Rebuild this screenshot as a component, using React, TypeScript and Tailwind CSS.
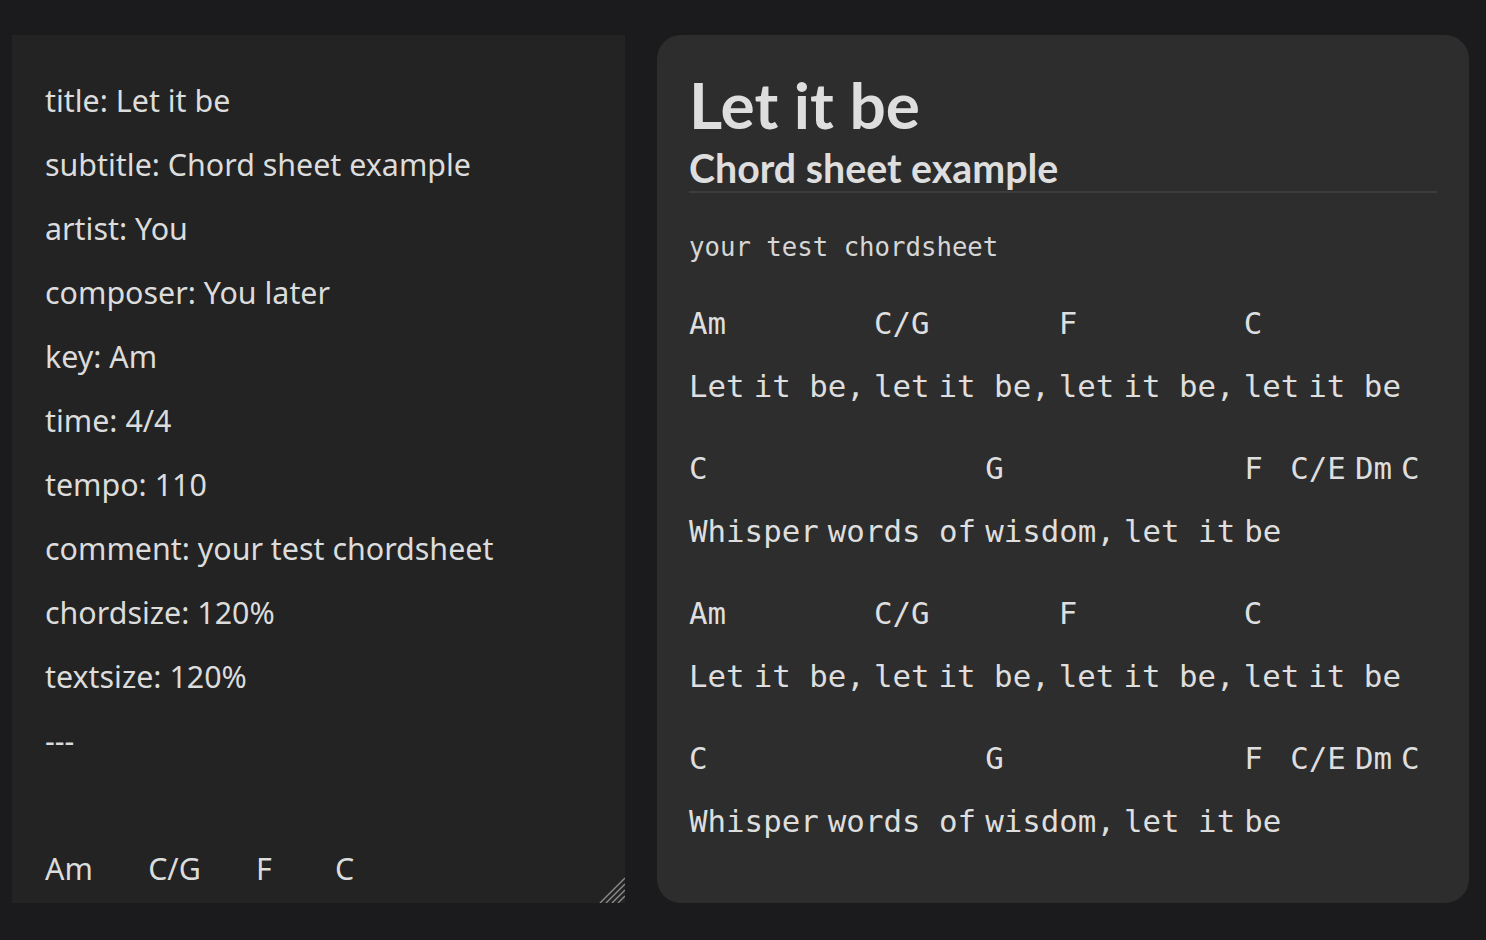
import React from "react";

type Col = { chord: string; lyric: string[] };

const lineA: Col[] = [
  { chord: "Am", lyric: ["Let", "it be,"] },
  { chord: "C/G", lyric: ["let", "it be,"] },
  { chord: "F", lyric: ["let", "it be,"] },
  { chord: "C", lyric: ["let", "it be"] },
];

const lineB: Col[] = [
  { chord: "C", lyric: ["Whisper", "words of"] },
  { chord: "G", lyric: ["wisdom,", "let it"] },
  { chord: "F", lyric: ["be"] },
  { chord: "C/E", lyric: [] },
  { chord: "Dm", lyric: [] },
  { chord: "C", lyric: [] },
];

const source = `title: Let it be
subtitle: Chord sheet example
artist: You
composer: You later
key: Am
time: 4/4
tempo: 110
comment: your test chordsheet
chordsize: 120%
textsize: 120%
---

Am       C/G       F        C
Let it be, let it be, let it be, let it be`;

function ChordLine({ cols }: { cols: Col[] }) {
  return (
    <div className="flex gap-[9px] mb-[19px]">
      {cols.map((c, i) => (
        <div key={i} className="flex flex-col">
          <div className="h-[63px] leading-[63px] whitespace-pre">{c.chord}</div>
          <div className="h-[63px] leading-[63px] flex gap-[9px] whitespace-pre">
            {c.lyric.map((w, j) => (
              <span key={j}>{w}</span>
            ))}
          </div>
        </div>
      ))}
    </div>
  );
}

export default function App() {
  return (
    <div className="w-[1486px] h-[940px] bg-[#1b1b1d] flex gap-8 pl-[12px] pr-[17px] pt-[35px] pb-[37px] overflow-hidden">
      <div className="relative w-[613px] h-[868px] shrink-0">
        <textarea
          readOnly
          value={source}
          spellCheck={false}
          className="block w-full h-full bg-[#232323] text-[#dcdcdc] text-[30.4px] leading-[64px] pl-[33px] pt-[34px] pr-4 overflow-hidden outline-none border-0 resize-none"
          style={{ fontFamily: '"Noto Sans", sans-serif' }}
        />
        <svg
          className="absolute right-0 bottom-0 pointer-events-none"
          width="26"
          height="26"
          viewBox="0 0 26 26"
        >
          <g stroke="#8a8a8a" strokeWidth="1.4">
            <line x1="1" y1="26" x2="26" y2="1" />
            <line x1="7" y1="26" x2="26" y2="7" />
            <line x1="13" y1="26" x2="26" y2="13" />
            <line x1="19" y1="26" x2="26" y2="19" />
          </g>
        </svg>
      </div>
      <div className="flex-1 h-[868px] bg-[#2d2d2d] rounded-3xl p-8 text-[#dedede]">
        <div className="border-b-2 border-[#3c3c3c]">
          <h1
            className="mt-[1px] text-[64px] leading-[74px] font-bold"
            style={{ fontFamily: 'Lato, "Noto Sans", sans-serif' }}
          >
            Let it be
          </h1>
          <h2
            className="mt-[2px] text-[39.3px] leading-[47px] font-bold"
            style={{ fontFamily: 'Lato, "Noto Sans", sans-serif' }}
          >
            Chord sheet example
          </h2>
        </div>
        <div style={{ fontFamily: '"DejaVu Sans Mono", monospace' }}>
          <div className="mt-[34px] text-[25.7px] leading-[40px] text-[#d6d6d6]">your test chordsheet</div>
          <div className="mt-[25px] text-[30.8px]">
            <ChordLine cols={lineA} />
            <ChordLine cols={lineB} />
            <ChordLine cols={lineA} />
            <ChordLine cols={lineB} />
          </div>
        </div>
      </div>
    </div>
  );
}
